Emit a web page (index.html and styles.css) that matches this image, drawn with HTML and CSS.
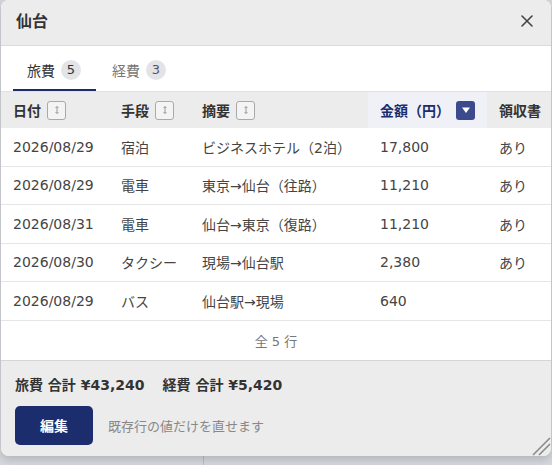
FILE: index.html
```html
<!DOCTYPE html>
<html lang="ja">
<head>
<meta charset="utf-8">
<title>仙台</title>
<link rel="stylesheet" href="styles.css">
</head>
<body>
<div class="backdrop">
  <div class="bg-line"></div>
</div>
<div class="dialog">
  <div class="dlg-head">
    <div class="dlg-title">仙台</div>
    <button class="close" aria-label="閉じる">
      <svg width="14" height="14" viewBox="0 0 14 14"><path d="M2 2 L12 12 M12 2 L2 12" stroke="#444" stroke-width="1.6" fill="none" stroke-linecap="round"/></svg>
    </button>
  </div>
  <div class="tabs">
    <div class="tab active">旅費<span class="badge">5</span></div>
    <div class="tab">経費<span class="badge">3</span></div>
  </div>
  <table class="grid">
    <colgroup>
      <col class="c1"><col class="c2"><col class="c3"><col class="c4"><col class="c5">
    </colgroup>
    <thead>
      <tr>
        <th><span class="hcell">日付<span class="sort"><svg width="8" height="10" viewBox="0 0 8 10"><path d="M4 1.5 V8.5 M2.5 3 L4 1.5 L5.5 3 M2.5 7 L4 8.5 L5.5 7" stroke="#999" stroke-width="1" fill="none"/></svg></span></span></th>
        <th><span class="hcell">手段<span class="sort"><svg width="8" height="10" viewBox="0 0 8 10"><path d="M4 1.5 V8.5 M2.5 3 L4 1.5 L5.5 3 M2.5 7 L4 8.5 L5.5 7" stroke="#999" stroke-width="1" fill="none"/></svg></span></span></th>
        <th><span class="hcell">摘要<span class="sort"><svg width="8" height="10" viewBox="0 0 8 10"><path d="M4 1.5 V8.5 M2.5 3 L4 1.5 L5.5 3 M2.5 7 L4 8.5 L5.5 7" stroke="#999" stroke-width="1" fill="none"/></svg></span></span></th>
        <th class="sorted"><span class="hcell">金額（円）<span class="sort on"><svg width="10" height="8" viewBox="0 0 10 8"><path d="M1 1.5 H9 L5 7 Z" fill="#fff"/></svg></span></span></th>
        <th>領収書</th>
      </tr>
    </thead>
    <tbody>
      <tr><td>2026/08/29</td><td>宿泊</td><td>ビジネスホテル（2泊）</td><td>17,800</td><td>あり</td></tr>
      <tr><td>2026/08/29</td><td>電車</td><td>東京→仙台（往路）</td><td>11,210</td><td>あり</td></tr>
      <tr><td>2026/08/31</td><td>電車</td><td>仙台→東京（復路）</td><td>11,210</td><td>あり</td></tr>
      <tr><td>2026/08/30</td><td>タクシー</td><td>現場→仙台駅</td><td>2,380</td><td>あり</td></tr>
      <tr><td>2026/08/29</td><td>バス</td><td>仙台駅→現場</td><td>640</td><td></td></tr>
    </tbody>
    <tfoot>
      <tr><td colspan="5" class="count">全 5 行</td></tr>
    </tfoot>
  </table>
  <div class="dlg-foot">
    <div class="totals"><span>旅費 合計 ¥43,240</span><span>経費 合計 ¥5,420</span></div>
    <div class="actions">
      <button class="btn">編集</button>
      <span class="hint">既存行の値だけを直せます</span>
    </div>
    <svg class="grip" width="22" height="22" viewBox="0 0 22 22"><path d="M21 4 L4 21 M21 10 L10 21" stroke="#8a8a8a" stroke-width="1.6" fill="none"/></svg>
  </div>
</div>
</body>
</html>
```
FILE: styles.css
```css
html, body {
  margin: 0;
  padding: 0;
  width: 552px;
  height: 465px;
  overflow: hidden;
  background: #d3d6db;
  font-family: "DejaVu Sans", "Noto Sans CJK JP", sans-serif;
  color: #444;
}

.backdrop {
  position: absolute;
  inset: 0;
  background: #d4d7dc;
}

.bg-line {
  position: absolute;
  left: 203px;
  top: 440px;
  width: 1px;
  height: 40px;
  background: #b9bcc1;
}

.dialog {
  position: absolute;
  left: 1px;
  top: 0;
  width: 550px;
  height: 456px;
  background: #fff;
  border-radius: 8px;
  overflow: hidden;
  box-shadow: 0 3px 10px rgba(0, 0, 0, 0.18);
  display: flex;
  flex-direction: column;
}

.dlg-head {
  height: 46px;
  flex: none;
  background: #ececec;
  border-bottom: 1px solid #dadada;
  display: flex;
  align-items: center;
  justify-content: space-between;
  padding: 0 16px 0 15px;
  box-sizing: border-box;
}

.dlg-title {
  font-family: "Noto Sans CJK JP", sans-serif;
  font-weight: 700;
  font-size: 16px;
  color: #333;
  margin-top: -6px;
}

.close {
  border: 0;
  background: none;
  padding: 0;
  width: 16px;
  height: 16px;
  display: flex;
  align-items: center;
  justify-content: center;
  margin-top: -4px;
}

.tabs {
  height: 46px;
  flex: none;
  display: flex;
  align-items: stretch;
  padding-left: 12px;
  border-bottom: 1px solid #e2e2e2;
  box-sizing: border-box;
  gap: 2px;
}

.tab {
  display: flex;
  align-items: center;
  gap: 6px;
  padding: 4px 15px 0 14px;
  font-family: "Noto Sans CJK JP", sans-serif;
  font-size: 14px;
  color: #777;
  border-bottom: 2px solid transparent;
}

.tab.active {
  color: #333;
  border-bottom-color: #1c2d6e;
}

.badge {
  display: inline-flex;
  align-items: center;
  justify-content: center;
  min-width: 20px;
  height: 20px;
  border-radius: 10px;
  background: #e3e4e8;
  color: #555;
  font-family: "DejaVu Sans", sans-serif;
  font-size: 13px;
}

.tab.active .badge {
  color: #333;
}

.grid {
  width: 550px;
  border-collapse: collapse;
  table-layout: fixed;
  font-size: 14px;
}

.c1 { width: 108px; }
.c2 { width: 81px; }
.c3 { width: 178px; }
.c4 { width: 119px; }
.c5 { width: 64px; }

.grid th {
  height: 36px;
  background: #ececec;
  text-align: left;
  padding: 0 0 0 12px;
  font-family: "Noto Sans CJK JP", sans-serif;
  font-weight: 700;
  font-size: 14px;
  color: #333;
  white-space: nowrap;
}

.grid th.sorted {
  background: #f0f1f6;
  color: #1c2d6e;
}

.hcell {
  display: inline-flex;
  align-items: center;
  gap: 6px;
}

.sorted .hcell {
  gap: 6px;
}

.sort {
  display: inline-flex;
  align-items: center;
  justify-content: center;
  width: 17px;
  height: 17px;
  border: 1px solid #a9a9a9;
  border-radius: 3px;
  background: #f4f4f4;
}

.sort.on {
  width: 19px;
  height: 19px;
  border: 0;
  background: #3a4a8c;
}

.grid td {
  height: 37.5px;
  padding: 0 0 0 12px;
  border-bottom: 1px solid #e6e6e6;
  white-space: nowrap;
  color: #444;
  font-size: 14px;
}

.grid td.count {
  height: 39px;
  padding: 0;
  text-align: center;
  color: #777;
  font-size: 13px;
  border-bottom: 0;
}

.dlg-foot {
  position: relative;
  flex: 1;
  background: #ececec;
  border-top: 1px solid #d6d6d6;
  padding: 13px 14px 0 14px;
}

.totals {
  display: flex;
  gap: 18px;
  font-weight: 700;
  font-size: 14px;
  color: #333;
  font-family: "DejaVu Sans", "Noto Sans CJK JP", sans-serif;
}

.actions {
  display: flex;
  align-items: center;
  gap: 15px;
  margin-top: 12px;
}

.btn {
  width: 78px;
  height: 39px;
  border: 0;
  border-radius: 5px;
  background: #1c2d6e;
  color: #fff;
  font-family: "Noto Sans CJK JP", sans-serif;
  font-weight: 700;
  font-size: 14px;
}

.hint {
  font-family: "Noto Sans CJK JP", sans-serif;
  font-size: 13px;
  color: #888;
}

.grip {
  position: absolute;
  right: 0;
  bottom: 0;
}
```
